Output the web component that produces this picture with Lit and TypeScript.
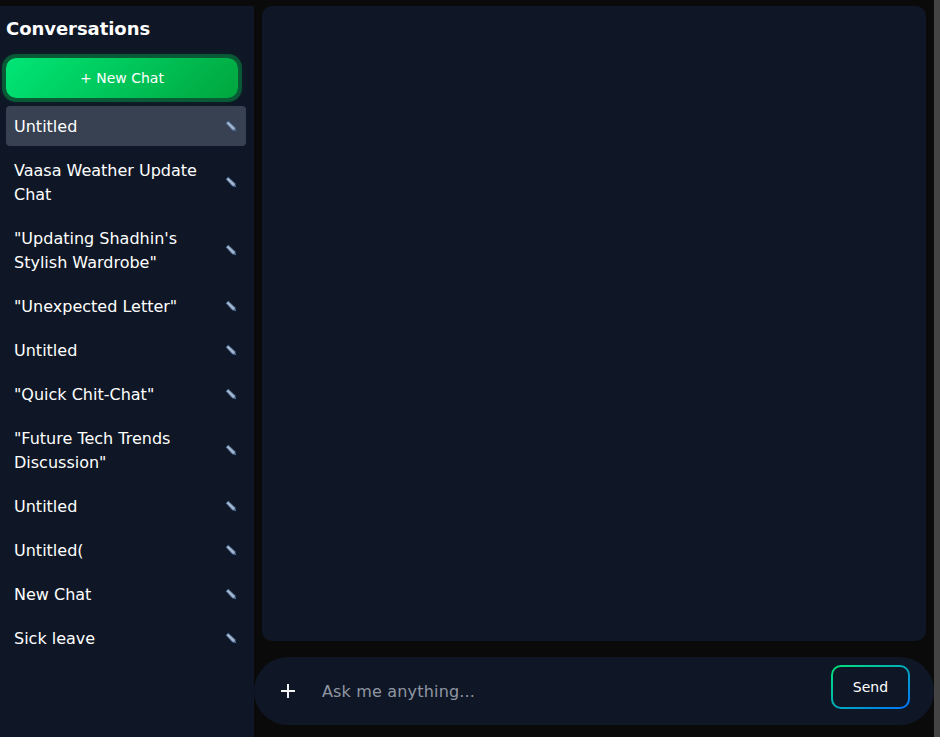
import { css, html, LitElement } from 'lit';
import { customElement, state } from 'lit/decorators.js';

@customElement('app-root')
export class AppRoot extends LitElement {
  @state() private chats: string[] = [
    'Untitled',
    'Vaasa Weather Update Chat',
    '"Updating Shadhin\'s Stylish Wardrobe"',
    '"Unexpected Letter"',
    'Untitled',
    '"Quick Chit-Chat"',
    '"Future Tech Trends Discussion"',
    'Untitled',
    'Untitled(',
    'New Chat',
    'Sick leave',
  ];

  @state() private activeIndex: number = 0;

  private renderPencil() {
    return html`
      <svg class="edit" width="12" height="12" viewBox="0 0 12 12" aria-label="Rename">
        <path d="M.8 3.2 3.2.8 10.2 7.2 11.2 11.2 7.2 10.2Z" fill="#54749e" />
        <path d="M2.2 3.2 3.2 2.2 9.6 8.2 8.2 9.6Z" fill="#a9b9ce" stroke="#a9b9ce" stroke-width=".8" />
      </svg>
    `;
  }

  render() {
    return html`
      <aside class="sidebar">
        <h2 class="title">Conversations</h2>
        <button class="new-chat">+ New Chat</button>
        <ul class="chat-list">
          ${this.chats.map(
            (chat, i) => html`
              <li class="chat-item ${i === this.activeIndex ? 'active' : ''}">
                <span class="chat-name">${chat}</span>
                ${this.renderPencil()}
              </li>
            `
          )}
        </ul>
      </aside>
      <main class="main">
        <section class="messages"></section>
        <form class="composer">
          <button type="button" class="attach" aria-label="Attach">
            <svg width="14" height="14" viewBox="0 0 14 14">
              <path d="M7 0v14M0 7h14" stroke="#f3f4f6" stroke-width="2" />
            </svg>
          </button>
          <input class="prompt" placeholder="Ask me anything..." />
          <button type="button" class="send">Send</button>
        </form>
      </main>
      <div class="edge"></div>
    `;
  }

  static styles = css`
    :host {
      display: flex;
      height: 100vh;
      overflow: hidden;
      background: #0a0a0a;
      font-family: 'DejaVu Sans', Verdana, sans-serif;
      color: #fff;
    }

    .sidebar {
      width: 254px;
      flex: none;
      box-sizing: border-box;
      margin-top: 6px;
      padding: 0 8px 0 6px;
      background: #0f1726;
    }

    .title {
      margin: 0;
      height: 52px;
      padding-top: 11px;
      box-sizing: border-box;
      font-size: 18px;
      line-height: 24px;
      font-weight: 700;
      letter-spacing: -0.05px;
    }

    .new-chat {
      display: block;
      width: 232px;
      height: 40px;
      border: none;
      border-radius: 10px;
      color: #fff;
      font: inherit;
      font-size: 14px;
      background: linear-gradient(135deg, #00e676, #00a63e);
      box-shadow: 0 0 0 4px rgba(0, 200, 83, 0.35), 0 0 12px rgba(0, 200, 83, 0.15);
    }

    .chat-list {
      list-style: none;
      margin: 8px 0 0;
      padding: 0;
      display: flex;
      flex-direction: column;
      gap: 4px;
    }

    .chat-item {
      display: flex;
      align-items: center;
      justify-content: space-between;
      padding: 8px;
      border-radius: 4px;
      font-size: 16px;
      line-height: 24px;
    }

    .chat-item.active {
      background: #374151;
    }

    .chat-name {
      flex: 1;
      min-width: 0;
      padding: 1px 20px 0 0;
      margin-bottom: -1px;
    }

    .edit {
      flex: none;
      margin-right: 1px;
    }

    .main {
      flex: 1;
      min-width: 0;
      display: flex;
      flex-direction: column;
    }

    .messages {
      flex: 1;
      margin: 6px 8px 16px;
      border-radius: 10px;
      background: #0f1726;
    }

    .composer {
      height: 68px;
      margin: 0 0 12px;
      display: flex;
      align-items: center;
      padding: 0 24px 0 27px;
      border-radius: 34px;
      background: #0f1726;
    }

    .attach {
      display: flex;
      padding: 0;
      border: none;
      background: none;
    }

    .prompt {
      flex: 1;
      min-width: 0;
      margin-left: 27px;
      padding: 0;
      border: none;
      outline: none;
      background: none;
      color: #fff;
      font: inherit;
      font-size: 16px;
      letter-spacing: 0.17px;
    }

    .prompt::placeholder {
      color: #8f96a3;
      opacity: 1;
    }

    .send {
      width: 79px;
      height: 44px;
      margin-bottom: 8px;
      border: 2px solid transparent;
      border-radius: 10px;
      color: #fff;
      font: inherit;
      font-size: 14px;
      background:
        linear-gradient(#0f1726, #0f1726) padding-box,
        linear-gradient(to bottom right, #00e676, #0072ff) border-box;
    }

    .edge {
      width: 6px;
      flex: none;
      background: #444;
    }
  `;
}
